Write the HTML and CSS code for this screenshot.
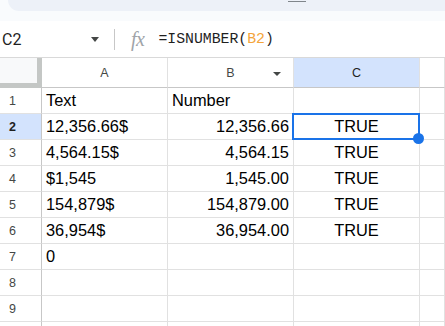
FILE: index.html
```html
<!DOCTYPE html>
<html lang="en">
<head>
    <meta charset="UTF-8">
    <title>ISNUMBER</title>
    <link rel="stylesheet" href="styles.css">
</head>
<body>
    <div class="top-band">
        <div class="toolbar-pill"><span class="handle"></span></div>
    </div>

    <div class="formula-bar">
        <div class="name-box">C2</div>
        <span class="caret"></span>
        <span class="divider"></span>
        <span class="fx">fx</span>
        <div class="formula">=ISNUMBER(<span class="ref">B2</span>)</div>
    </div>

    <div class="sheet">
        <div class="corner"></div>
        <div class="col-head">A</div>
        <div class="col-head">B<span class="filter"></span></div>
        <div class="col-head active">C</div>
        <div class="col-head"></div>

        <div class="row-head">1</div>
        <div class="cell">Text</div>
        <div class="cell">Number</div>
        <div class="cell"></div>
        <div class="cell"></div>

        <div class="row-head active">2</div>
        <div class="cell">12,356.66$</div>
        <div class="cell num">12,356.66</div>
        <div class="cell bool selected">TRUE</div>
        <div class="cell"></div>

        <div class="row-head">3</div>
        <div class="cell">4,564.15$</div>
        <div class="cell num">4,564.15</div>
        <div class="cell bool">TRUE</div>
        <div class="cell"></div>

        <div class="row-head">4</div>
        <div class="cell">$1,545</div>
        <div class="cell num">1,545.00</div>
        <div class="cell bool">TRUE</div>
        <div class="cell"></div>

        <div class="row-head">5</div>
        <div class="cell">154,879$</div>
        <div class="cell num">154,879.00</div>
        <div class="cell bool">TRUE</div>
        <div class="cell"></div>

        <div class="row-head">6</div>
        <div class="cell">36,954$</div>
        <div class="cell num">36,954.00</div>
        <div class="cell bool">TRUE</div>
        <div class="cell"></div>

        <div class="row-head">7</div>
        <div class="cell">0</div>
        <div class="cell"></div>
        <div class="cell"></div>
        <div class="cell"></div>

        <div class="row-head">8</div>
        <div class="cell"></div>
        <div class="cell"></div>
        <div class="cell"></div>
        <div class="cell"></div>

        <div class="row-head">9</div>
        <div class="cell"></div>
        <div class="cell"></div>
        <div class="cell"></div>
        <div class="cell"></div>

        <div class="row-head"></div>
        <div class="cell"></div>
        <div class="cell"></div>
        <div class="cell"></div>
        <div class="cell"></div>
    </div>
</body>
</html>
```

FILE: styles.css
```css
* {
    box-sizing: border-box;
}
body {
    margin: 0;
    overflow: hidden;
    background: #fff;
    font-family: 'Liberation Sans', Arial, sans-serif;
    color: #000;
}

/* toolbar strip at the very top */
.top-band {
    height: 21px;
    background: #f9fbfd;
}
.toolbar-pill {
    height: 11px;
    margin-left: 8px;
    background: #edf1f8;
    border-bottom-left-radius: 11px;
    padding-top: 1px;
}
.handle {
    display: block;
    width: 18px;
    height: 1px;
    margin-left: 280px;
    background: #80868b;
}

/* formula bar */
.formula-bar {
    height: 37px;
    display: flex;
    align-items: center;
    border-bottom: 1px solid #d9d9d9;
}
.name-box {
    width: 91px;
    padding-left: 2px;
    font-family: Roboto, 'Liberation Sans', sans-serif;
    font-size: 16px;
    color: #1f1f1f;
}
.caret {
    width: 0;
    height: 0;
    border-left: 4.5px solid transparent;
    border-right: 4.5px solid transparent;
    border-top: 5px solid #444746;
}
.divider {
    width: 1px;
    height: 21px;
    margin-left: 15px;
    background: #c7c7c7;
}
.fx {
    margin-left: 16px;
    font-family: 'Liberation Serif', serif;
    font-style: italic;
    font-size: 20px;
    color: #a0a4a8;
    letter-spacing: -0.5px;
}
.formula {
    margin-left: 14px;
    font-family: 'Liberation Mono', 'DejaVu Sans Mono', monospace;
    font-size: 14.8px;
    color: #1f1f1f;
}
.ref {
    color: #f4a43a;
}

/* grid */
.sheet {
    display: grid;
    grid-template-columns: 42px 126px 126px 126px 1fr;
    grid-template-rows: 30px repeat(10, 26px);
}
.sheet > div {
    border-right: 1px solid #e1e1e1;
    border-bottom: 1px solid #e1e1e1;
    display: flex;
    align-items: center;
    white-space: nowrap;
}
.sheet > .corner {
    background: #f8f9fa;
    border-right: 5px solid #c4c7c5;
    border-bottom: 5px solid #c4c7c5;
}
.sheet > .col-head {
    justify-content: center;
    position: relative;
    font-size: 12.5px;
    color: #444746;
    border-bottom-color: #c7c7c7;
}
.sheet > .col-head.active {
    background: #d3e3fd;
    color: #1f1f1f;
}
.filter {
    position: absolute;
    right: 12px;
    top: 14px;
    width: 0;
    height: 0;
    border-left: 4.5px solid transparent;
    border-right: 4.5px solid transparent;
    border-top: 4.5px solid #444746;
}
.sheet > .row-head {
    padding-left: 9px;
    font-size: 12.5px;
    color: #444746;
    border-right-color: #c7c7c7;
}
.sheet > .row-head.active {
    background: #d3e3fd;
    color: #1f1f1f;
    font-weight: bold;
}
.cell {
    padding: 0 4px;
    font-size: 16.4px;
}
.cell.num {
    justify-content: flex-end;
}
.cell.bool {
    justify-content: center;
}
.cell.selected {
    position: relative;
}
.cell.selected::after {
    content: "";
    position: absolute;
    top: -1px;
    left: -2px;
    right: -1px;
    bottom: -1px;
    border: 2px solid #1a73e8;
}
.cell.selected::before {
    content: "";
    position: absolute;
    left: 119px;
    top: 19px;
    width: 11px;
    height: 11px;
    border-radius: 50%;
    background: #1a73e8;
    z-index: 1;
}
```
